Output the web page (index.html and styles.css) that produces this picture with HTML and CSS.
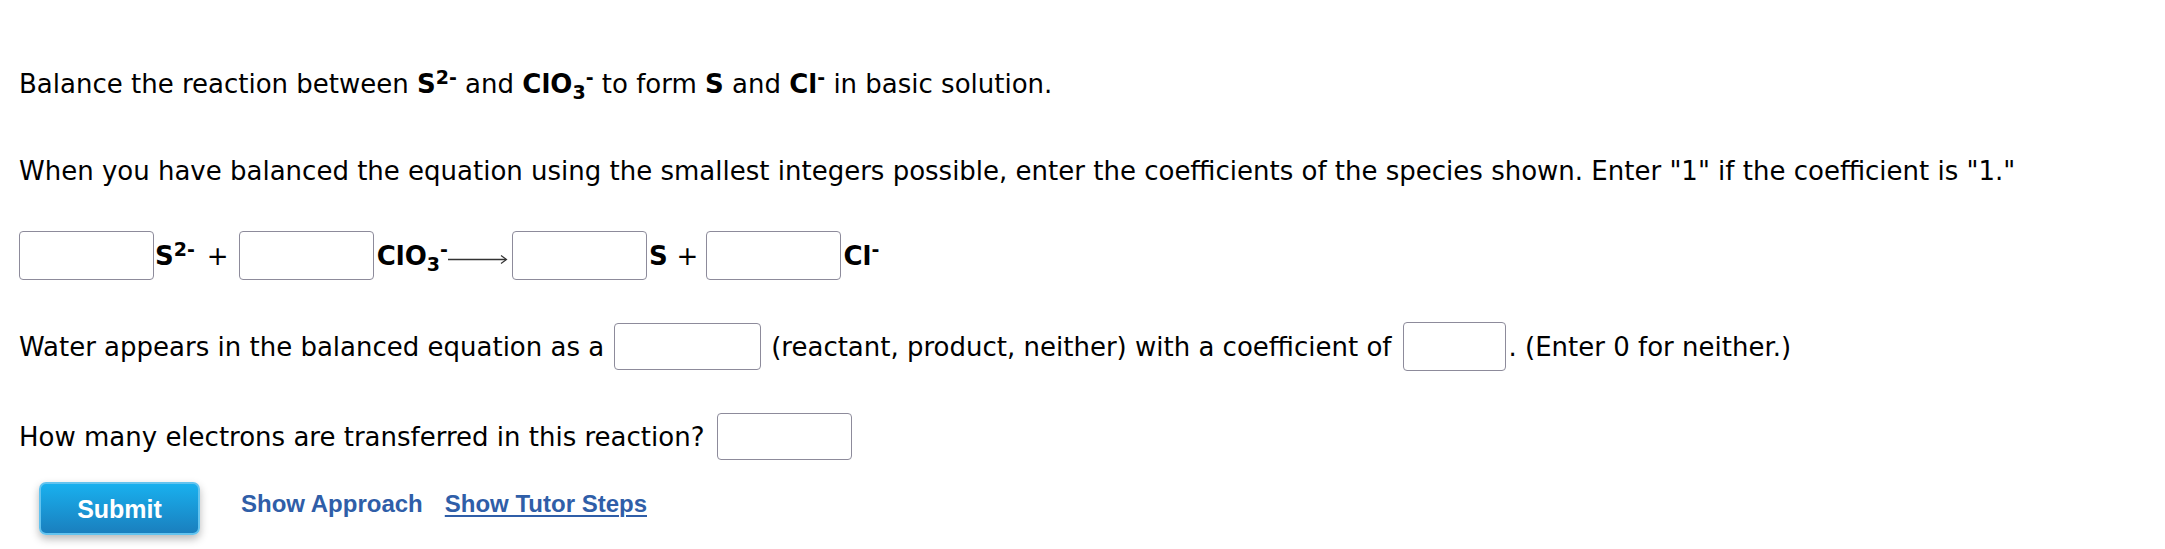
FILE: index.html
```html
<!DOCTYPE html>
<html>
<head>
<meta charset="utf-8">
<link rel="stylesheet" href="styles.css">
</head>
<body>
<div class="page">
  <p class="line first">Balance the reaction between <b>S<sup>2-</sup></b> and <b>ClO<sub>3</sub><sup>-</sup></b> to form <b>S</b> and <b>Cl<sup>-</sup></b> in basic solution.</p>
  <p class="line second">When you have balanced the equation using the smallest integers possible, enter the coefficients of the species shown. Enter "1" if the coefficient is "1."</p>

  <div class="row eq-row">
    <input class="box eq" type="text">
    <span class="chem c1">S<sup>2-</sup></span>
    <span class="plus p1">+</span>
    <input class="box eq" type="text">
    <span class="chem c2">ClO<sub>3</sub><sup>-</sup></span>
    <svg class="arrow" width="60" height="16" viewBox="0 0 60 16"><path d="M0 8.5H58" stroke="#333" stroke-width="1.4" fill="none"/><path d="M53 4.5L58.5 8.5L53 12.5" stroke="#333" stroke-width="1.2" fill="none"/></svg>
    <input class="box eq e3" type="text">
    <span class="chem c3">S</span>
    <span class="plus p2">+</span>
    <input class="box eq" type="text">
    <span class="chem c4">Cl<sup>-</sup></span>
  </div>

  <div class="row water-row">
    <span>Water appears in the balanced equation as a</span>
    <input class="box wide" type="text">
    <span>(reactant, product, neither) with a coefficient of</span>
    <input class="box narrow" type="text">
    <span class="after">. (Enter 0 for neither.)</span>
  </div>

  <div class="row electrons-row">
    <span>How many electrons are transferred in this reaction?</span>
    <input class="box mid" type="text">
  </div>

  <div class="actions">
    <button class="submit" type="button">Submit</button>
    <a class="link" href="#">Show Approach</a>
    <a class="link under" href="#">Show Tutor Steps</a>
  </div>
</div>
</body>
</html>
```
FILE: styles.css
```css
html, body {
  margin: 0;
  padding: 0;
  background: #ffffff;
}
body {
  font-family: "DejaVu Sans", Verdana, sans-serif;
  font-size: 26px;
  color: #000;
  width: 2165px;
  height: 549px;
  overflow: hidden;
}
.page {
  padding: 68px 0 0 19px;
}
.line {
  margin: 0;
  line-height: 32px;
  white-space: nowrap;
}
.first b, .first b * { font-weight: bold; }
.second {
  margin-top: 55px;
}
sup {
  font-size: 19px;
  line-height: 0;
  vertical-align: 9px;
}
sub {
  font-size: 19px;
  line-height: 0;
  vertical-align: -6px;
}
.row {
  display: flex;
  align-items: center;
  white-space: nowrap;
}
.box {
  box-sizing: border-box;
  border: 1.5px solid #8d8b9b;
  border-radius: 4px;
  background: #fff;
  margin: 0;
  padding: 0;
  font: inherit;
  outline: none;
}
.eq-row {
  margin-top: 44px;
  height: 49px;
}
.eq {
  width: 135px;
  height: 49px;
}
.chem {
  font-weight: bold;
}
.c1 { margin-left: 1px; }
.p1 { margin-left: 12px; margin-right: 10px; }
.c2 { margin-left: 3px; }
.arrow { margin-left: 0; margin-top: 6px; }
.e3 { margin-left: 4px; }
.c3 { margin-left: 2px; }
.p2 { margin-left: 9px; margin-right: 8px; }
.c4 { margin-left: 2px; }

.water-row {
  margin-top: 43px;
  height: 47px;
}
.wide {
  width: 147px;
  height: 47px;
  margin: 0 10px 0 10px;
}
.narrow {
  width: 103px;
  height: 49px;
  margin-left: 12px;
  margin-right: 2px;
}
.electrons-row {
  margin-top: 43px;
  height: 47px;
}
.mid {
  width: 135px;
  height: 47px;
  margin-left: 13px;
}
.actions {
  display: flex;
  align-items: flex-start;
  margin-top: 22px;
  padding-left: 20px;
}
.submit {
  width: 161px;
  height: 53px;
  box-sizing: border-box;
  border: 2px solid #63c3ef;
  border-radius: 7px;
  background: linear-gradient(#19b0ee, #1a7fbe);
  color: #fff;
  font-family: "Liberation Sans", Arial, sans-serif;
  font-weight: bold;
  font-size: 25px;
  box-shadow: 0 4px 8px rgba(0, 0, 0, 0.28);
  padding: 2px 0 0 0;
  cursor: pointer;
}
.link {
  font-family: "Liberation Sans", Arial, sans-serif;
  font-weight: bold;
  font-size: 24px;
  color: #2f5ea8;
  text-decoration: none;
  line-height: 28px;
  margin-top: 8px;
}
.actions .link:first-of-type { margin-left: 41px; }
.under {
  margin-left: 22px;
  text-decoration: underline;
  text-decoration-thickness: 2px;
  text-underline-offset: 3px;
}
```
